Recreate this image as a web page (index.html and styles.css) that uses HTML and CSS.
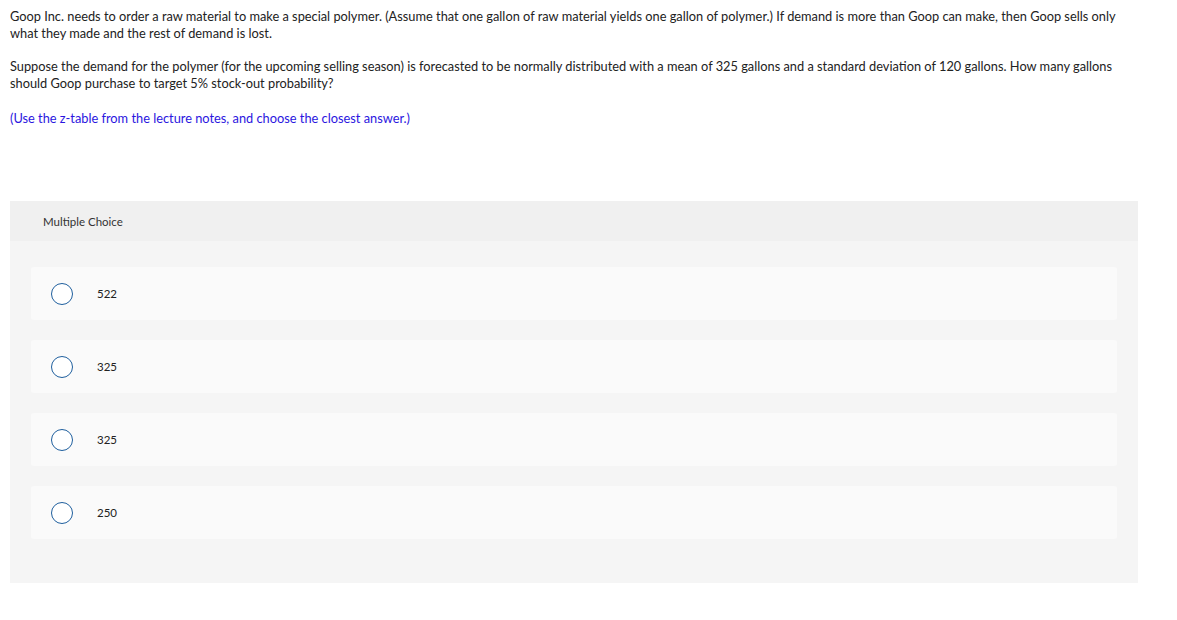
FILE: index.html
```html
<!DOCTYPE html>
<html>
<head>
<meta charset="utf-8">
<link rel="stylesheet" href="styles.css">
</head>
<body>
<div class="question">
  <p>Goop Inc. needs to order a raw material to make a special polymer. (Assume that one gallon of raw material yields one gallon of polymer.) If demand is more than Goop can make, then Goop sells only what they made and the rest of demand is lost.</p>
  <p class="p2">Suppose the demand for the polymer (for the upcoming selling season) is forecasted to be normally distributed with a mean of 325 gallons and a standard deviation of 120 gallons. How many gallons should Goop purchase to target 5% stock-out probability?</p>
  <p class="hint">(Use the z-table from the lecture notes, and choose the closest answer.)</p>
</div>
<div class="panel">
  <div class="panel-head">Multiple Choice</div>
  <div class="panel-body">
    <label class="option"><span class="radio"></span><span class="val">522</span></label>
    <label class="option"><span class="radio"></span><span class="val">325</span></label>
    <label class="option"><span class="radio"></span><span class="val">325</span></label>
    <label class="option"><span class="radio"></span><span class="val">250</span></label>
  </div>
</div>
</body>
</html>
```
FILE: styles.css
```css
html, body {
  margin: 0;
  padding: 0;
  background: #fff;
}
body {
  font-family: "Lato", "Liberation Sans", sans-serif;
  color: #222;
  padding: 8px 10px 0 10px;
}
.question {
  width: 1128px;
  font-size: 12.8px;
  line-height: 17px;
}
.question p {
  margin: 0 0 16px 0;
}
.question p.p2 {
  margin-bottom: 18px;
}
.question p.hint {
  color: #2b16e0;
  margin: 0;
}
.panel {
  margin-top: 74px;
  width: 1128px;
  background: #f5f5f5;
}
.panel-head {
  background: #f0f0f0;
  height: 40px;
  display: flex;
  align-items: center;
  padding-left: 33px;
  font-size: 11.5px;
  color: #333;
}
.panel-body {
  padding: 26px 21px 44px 21px;
  display: flex;
  flex-direction: column;
  gap: 20px;
}
.option {
  height: 53px;
  background: #fafafa;
  border-radius: 3px;
  display: flex;
  align-items: center;
  padding-left: 20px;
  font-size: 11.5px;
  color: #222;
}
.radio {
  border: 1.3px solid #1f5f9e;
  border-radius: 50%;
  box-sizing: border-box;
  width: 22px;
  height: 22px;
  background: #fff;
}
.val {
  margin-left: 24px;
}
```
